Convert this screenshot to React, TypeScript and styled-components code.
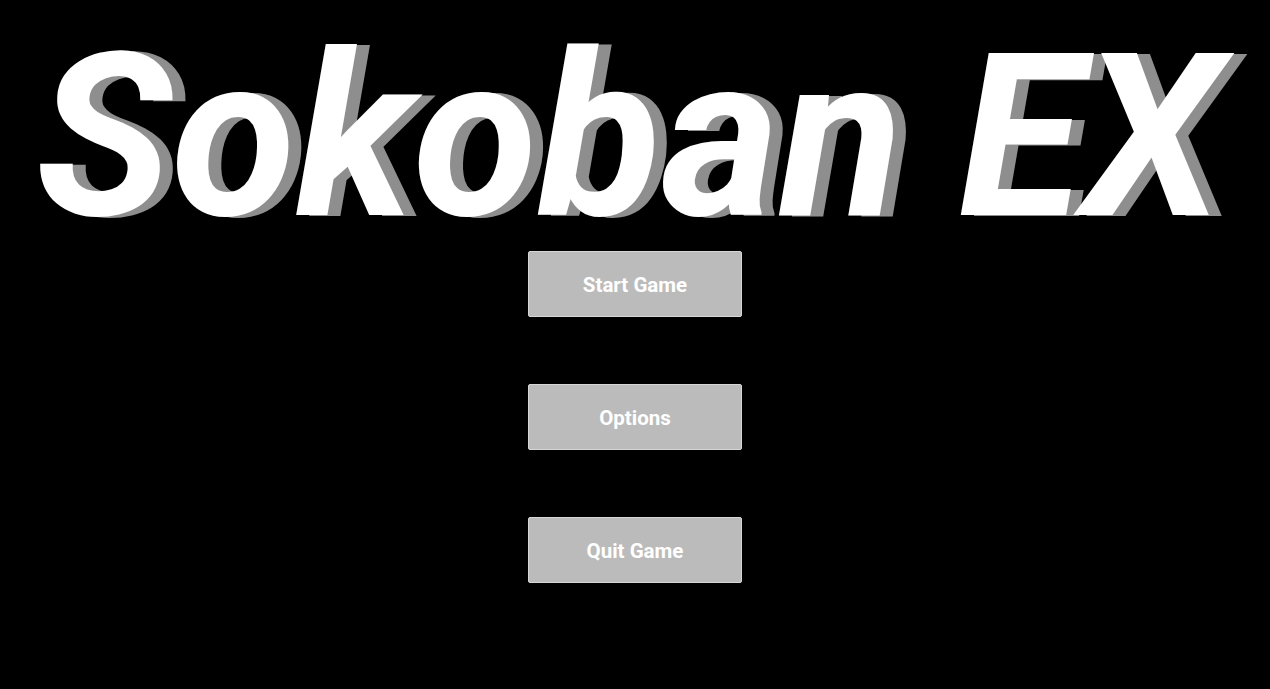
import React from "react";
import styled, { createGlobalStyle } from "styled-components";

const Global = createGlobalStyle`
  html, body {
    margin: 0;
    padding: 0;
    background: #000;
    height: 100%;
  }
  #root {
    min-height: 100vh;
  }
`;

const Screen = styled.main`
  min-height: 100vh;
  background: #000;
  display: flex;
  flex-direction: column;
  align-items: center;
  font-family: Roboto, "Liberation Sans", sans-serif;
  overflow: hidden;
`;

const Title = styled.h1`
  margin: 24px 12px 0 0;
  font-family: Roboto, "Liberation Sans", sans-serif;
  font-weight: 700;
  font-style: italic;
  font-size: 227px;
  line-height: 227px;
  color: #fff;
  white-space: nowrap;
  text-align: center;
  text-shadow: 13px 1px 0 #8e8e8e;
`;

const Menu = styled.nav`
  margin-top: 0;
  display: flex;
  flex-direction: column;
  align-items: center;
  gap: 67px;
`;

const MenuButton = styled.button`
  width: 214px;
  height: 66px;
  box-sizing: border-box;
  background: #bbbbbb;
  border: 1px solid #d6d6d6;
  border-radius: 2px;
  color: #fff;
  font-family: Roboto, "Liberation Sans", sans-serif;
  font-weight: 700;
  font-size: 20.5px;
  cursor: pointer;
  padding: 1px 0 0;
`;

export default function App() {
  return (
    <>
      <Global />
      <Screen>
        <Title>Sokoban EX</Title>
        <Menu>
          <MenuButton>Start Game</MenuButton>
          <MenuButton>Options</MenuButton>
          <MenuButton>Quit Game</MenuButton>
        </Menu>
      </Screen>
    </>
  );
}
